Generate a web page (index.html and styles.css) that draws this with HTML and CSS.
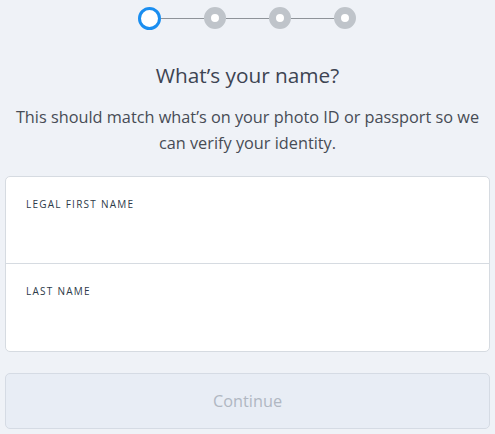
FILE: index.html
```html
<!DOCTYPE html>
<html lang="en">
<head>
<meta charset="utf-8">
<title>What's your name?</title>
<link rel="stylesheet" href="styles.css">
</head>
<body>
<main class="page">
  <div class="stepper">
    <span class="step step-active"></span>
    <span class="step-line"></span>
    <span class="step"></span>
    <span class="step-line"></span>
    <span class="step"></span>
    <span class="step-line"></span>
    <span class="step"></span>
  </div>
  <h1 class="title">What’s your name?</h1>
  <p class="subtitle">This should match what’s on your photo ID or passport so we can verify your identity.</p>
  <div class="card">
    <label class="field">
      <span class="field-label">LEGAL FIRST NAME</span>
      <input class="field-input" type="text">
    </label>
    <label class="field field-last">
      <span class="field-label">LAST NAME</span>
      <input class="field-input" type="text">
    </label>
  </div>
  <button class="btn" type="button" disabled>Continue</button>
</main>
</body>
</html>
```
FILE: styles.css
```css
* { box-sizing: border-box; }
html, body { margin: 0; padding: 0; }
body {
  background: #eff2f7;
  font-family: "Open Sans", "Lato", sans-serif;
  color: #3c4350;
}
.page {
  width: 495px;
  padding: 7px 5px 0 5px;
  display: flex;
  flex-direction: column;
  align-items: stretch;
}
.stepper {
  display: flex;
  align-items: center;
  justify-content: center;
  height: 22px;
  padding-right: 2px;
}
.step {
  width: 22px;
  height: 22px;
  border-radius: 50%;
  background: #fff;
  border: 7px solid #bfc4ca;
  flex: none;
}
.step-active {
  border: 3px solid #1a8ef0;
  width: 23px;
  height: 23px;
}
.step-line {
  width: 43px;
  height: 1px;
  background: #8e9399;
  flex: none;
}
.title {
  margin: 31px 0 0 0;
  font-size: 20.8px;
  font-weight: 400;
  line-height: 30px;
  text-align: center;
  color: #3d4452;
}
.subtitle {
  margin: 14px 0 0 0;
  padding: 0 2px;
  font-size: 16.3px;
  line-height: 26px;
  text-align: center;
  color: #474c55;
}
.card {
  margin-top: 20px;
  background: #fff;
  border: 1px solid #d6dbe1;
  border-radius: 5px;
  display: flex;
  flex-direction: column;
}
.field {
  display: flex;
  flex-direction: column;
  height: 87px;
  padding: 20px 20px 0 20px;
  border-bottom: 1px solid #d6dbe1;
}
.field-last { border-bottom: none; height: 87px; }
.field-label {
  font-family: "Open Sans", "Lato", sans-serif;
  font-size: 10px;
  letter-spacing: 1.25px;
  color: #2d3a48;
  line-height: 14px;
}
.field-input {
  border: none;
  outline: none;
  background: transparent;
  font-size: 16px;
  margin-top: 8px;
  padding: 0;
}
.btn {
  margin-top: 21px;
  height: 56px;
  background: #e8edf5;
  border: 1px solid #d5dbe4;
  border-radius: 5px;
  font-family: "Open Sans", "Lato", sans-serif;
  font-size: 16.3px;
  color: #b0b7c2;
}
```
